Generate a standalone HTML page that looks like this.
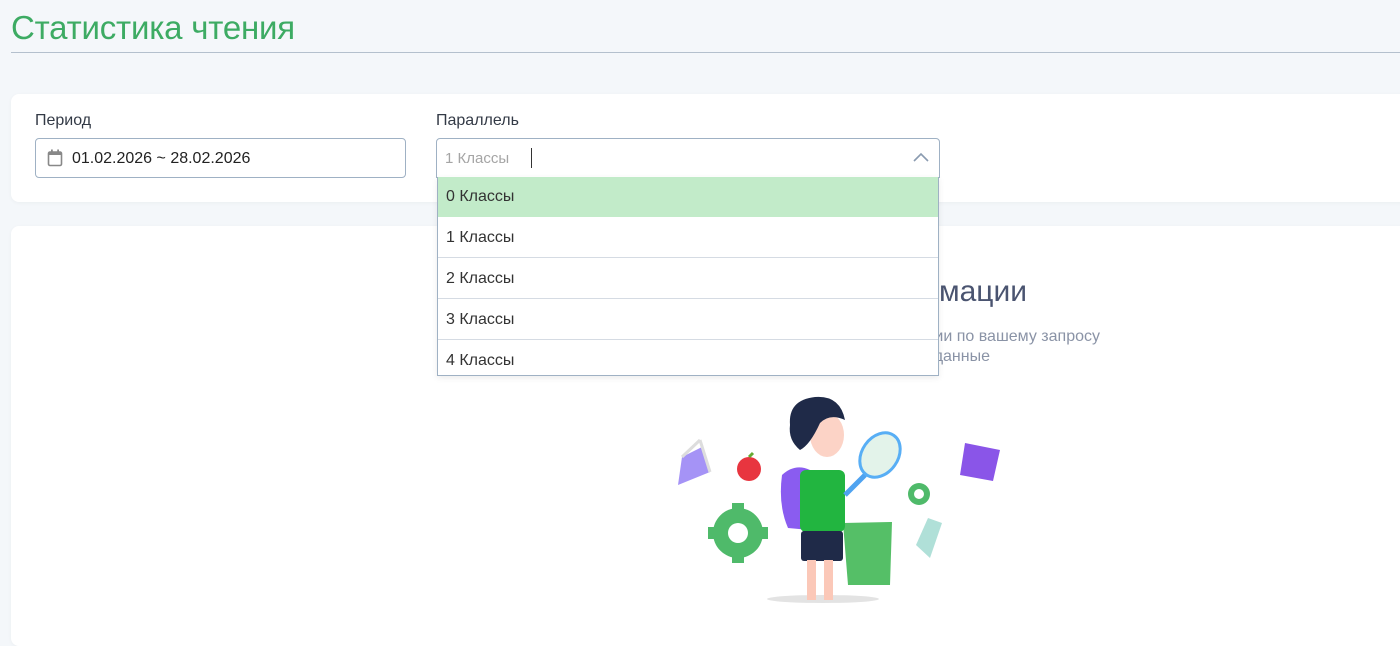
<!DOCTYPE html>
<html><head><meta charset="utf-8"><style>
*{margin:0;padding:0;box-sizing:border-box}
body{width:1400px;height:632px;overflow:hidden;background:#f4f7fa;font-family:"Liberation Sans","DejaVu Sans",sans-serif;position:relative}
.title{position:absolute;left:11px;top:9px;font-size:33px;color:#3dab63;letter-spacing:-0.2px}
.line{position:absolute;left:11px;right:0;top:52px;height:1px;background:#b4c0cd}
.card{position:absolute;left:11px;right:-10px;background:#fff;border-radius:8px;box-shadow:0 1px 4px rgba(0,0,0,0.04)}
.lbl{position:absolute;font-size:16px;color:#333a46}
.inp{position:absolute;height:40px;border:1px solid #9fb1c4;border-radius:4px;background:#fff}
.dd{position:absolute;left:437px;top:177px;width:502px;height:199px;background:#fff;border:1px solid #9fb1c4;border-top:none;overflow:hidden;box-shadow:0 2px 6px rgba(0,0,0,0.08)}
.it{height:41px;line-height:41px;padding-left:8px;font-size:16px;color:#333;border-bottom:1px solid #d5dbe3}
</style></head><body>
<div class="title">Статистика чтения</div>
<div class="line"></div>
<div class="card" style="top:94px;height:108px"></div>
<div class="lbl" style="left:35px;top:112px">Период</div>
<div class="lbl" style="left:436px;top:112px">Параллель</div>
<div class="inp" style="left:35px;top:138px;width:371px">
<svg style="position:absolute;left:11px;top:10px" width="16" height="18" viewBox="0 0 16 18"><rect x="1.5" y="3" width="13" height="13.5" rx="1.5" fill="none" stroke="#888" stroke-width="1.6"/><rect x="1.5" y="3" width="13" height="3" fill="#888"/><rect x="4" y="0.5" width="1.8" height="4" fill="#888"/><rect x="10.2" y="0.5" width="1.8" height="4" fill="#888"/></svg>
<span style="position:absolute;left:36px;top:11px;font-size:16px;color:#222">01.02.2026 ~ 28.02.2026</span></div>
<div class="inp" style="left:436px;top:138px;width:504px;border-radius:4px 4px 0 0">
<span style="position:absolute;left:8px;top:11px;font-size:15px;color:#a5a5a5">1 Классы</span>
<span style="position:absolute;left:94px;top:9px;width:1px;height:20px;background:#333"></span>
<svg style="position:absolute;right:10px;top:13px" width="16" height="10" viewBox="0 0 16 10"><path d="M1 9 L8 2 L15 9" fill="none" stroke="#8a9bb0" stroke-width="1.6"/></svg></div>
<div class="card" style="top:226px;height:420px"></div>
<div style="position:absolute;right:373px;top:275px;font-size:30px;color:#4a5470;white-space:nowrap">Нет информации</div>
<div style="position:absolute;right:300px;top:328px;font-size:16px;color:#8a93a6;white-space:nowrap">Нет информации по вашему запросу</div>
<div style="position:absolute;right:410px;top:348px;font-size:16px;color:#8a93a6;white-space:nowrap">данные</div>
<svg style="position:absolute;left:660px;top:385px" width="360" height="225" viewBox="0 0 360 225">
<ellipse cx="163" cy="214" rx="56" ry="4" fill="#e3e3e3"/>
<path d="M22 72 L42 62 L50 87 L18 100 Z" fill="#9b87f5" opacity=".9"/><path d="M40 55 L50 87 M22 72 L40 55" stroke="#ddd" stroke-width="3" fill="none"/>
<circle cx="89" cy="84" r="12" fill="#e8353f"/><path d="M89 72 l4 -4" stroke="#6a3" stroke-width="3"/>
<path d="M78 148 m-25 0 a25 25 0 1 0 50 0 a25 25 0 1 0 -50 0 M78 148 m-10 0 a10 10 0 1 0 20 0 a10 10 0 1 0 -20 0" fill="#4fba6a" fill-rule="evenodd"/>
<g fill="#4fba6a"><rect x="72" y="118" width="12" height="10"/><rect x="72" y="168" width="12" height="10"/><rect x="48" y="142" width="10" height="12"/><rect x="98" y="142" width="10" height="12"/></g>
<path d="M259 109 m-11 0 a11 11 0 1 0 22 0 a11 11 0 1 0 -22 0 M259 109 m-5 0 a5 5 0 1 0 10 0 a5 5 0 1 0 -10 0" fill="#4fba6a" fill-rule="evenodd"/>
<path d="M305 58 L340 65 L333 96 L300 90 Z" fill="#8a55e8"/>
<path d="M256 160 L268 133 L282 138 L270 173 Z" fill="#b0e0d8"/>
<path d="M183 138 L232 137 L230 200 L188 200 Z" fill="#55bf67"/>
<path d="M122 90 Q135 78 150 85 L150 145 L128 143 Q118 120 122 90Z" fill="#8a5cf0"/>
<rect x="140" y="85" width="45" height="62" rx="6" fill="#22b540"/>
<rect x="141" y="146" width="42" height="30" rx="3" fill="#1f2a48"/>
<rect x="147" y="175" width="9" height="40" fill="#fbc8b8"/><rect x="164" y="175" width="9" height="40" fill="#fbc8b8"/>
<ellipse cx="167" cy="50" rx="17" ry="22" fill="#fcd3c6"/>
<path d="M130 40 Q128 15 155 12 Q180 10 185 35 Q170 28 160 38 Q150 60 140 65 Q128 55 130 40Z" fill="#1f2a48"/>
<path d="M185 110 L205 90" stroke="#4fa3f0" stroke-width="5"/>
<ellipse cx="220" cy="70" rx="18" ry="24" transform="rotate(35 220 70)" fill="#e3f3ea" stroke="#58aef5" stroke-width="3"/>
</svg>
<div class="dd">
<div class="it" style="background:#c2ebc9;border-bottom:none;height:40px;line-height:40px">0 Классы</div>
<div class="it">1 Классы</div>
<div class="it">2 Классы</div>
<div class="it">3 Классы</div>
<div class="it">4 Классы</div>
</div>
</body></html>
